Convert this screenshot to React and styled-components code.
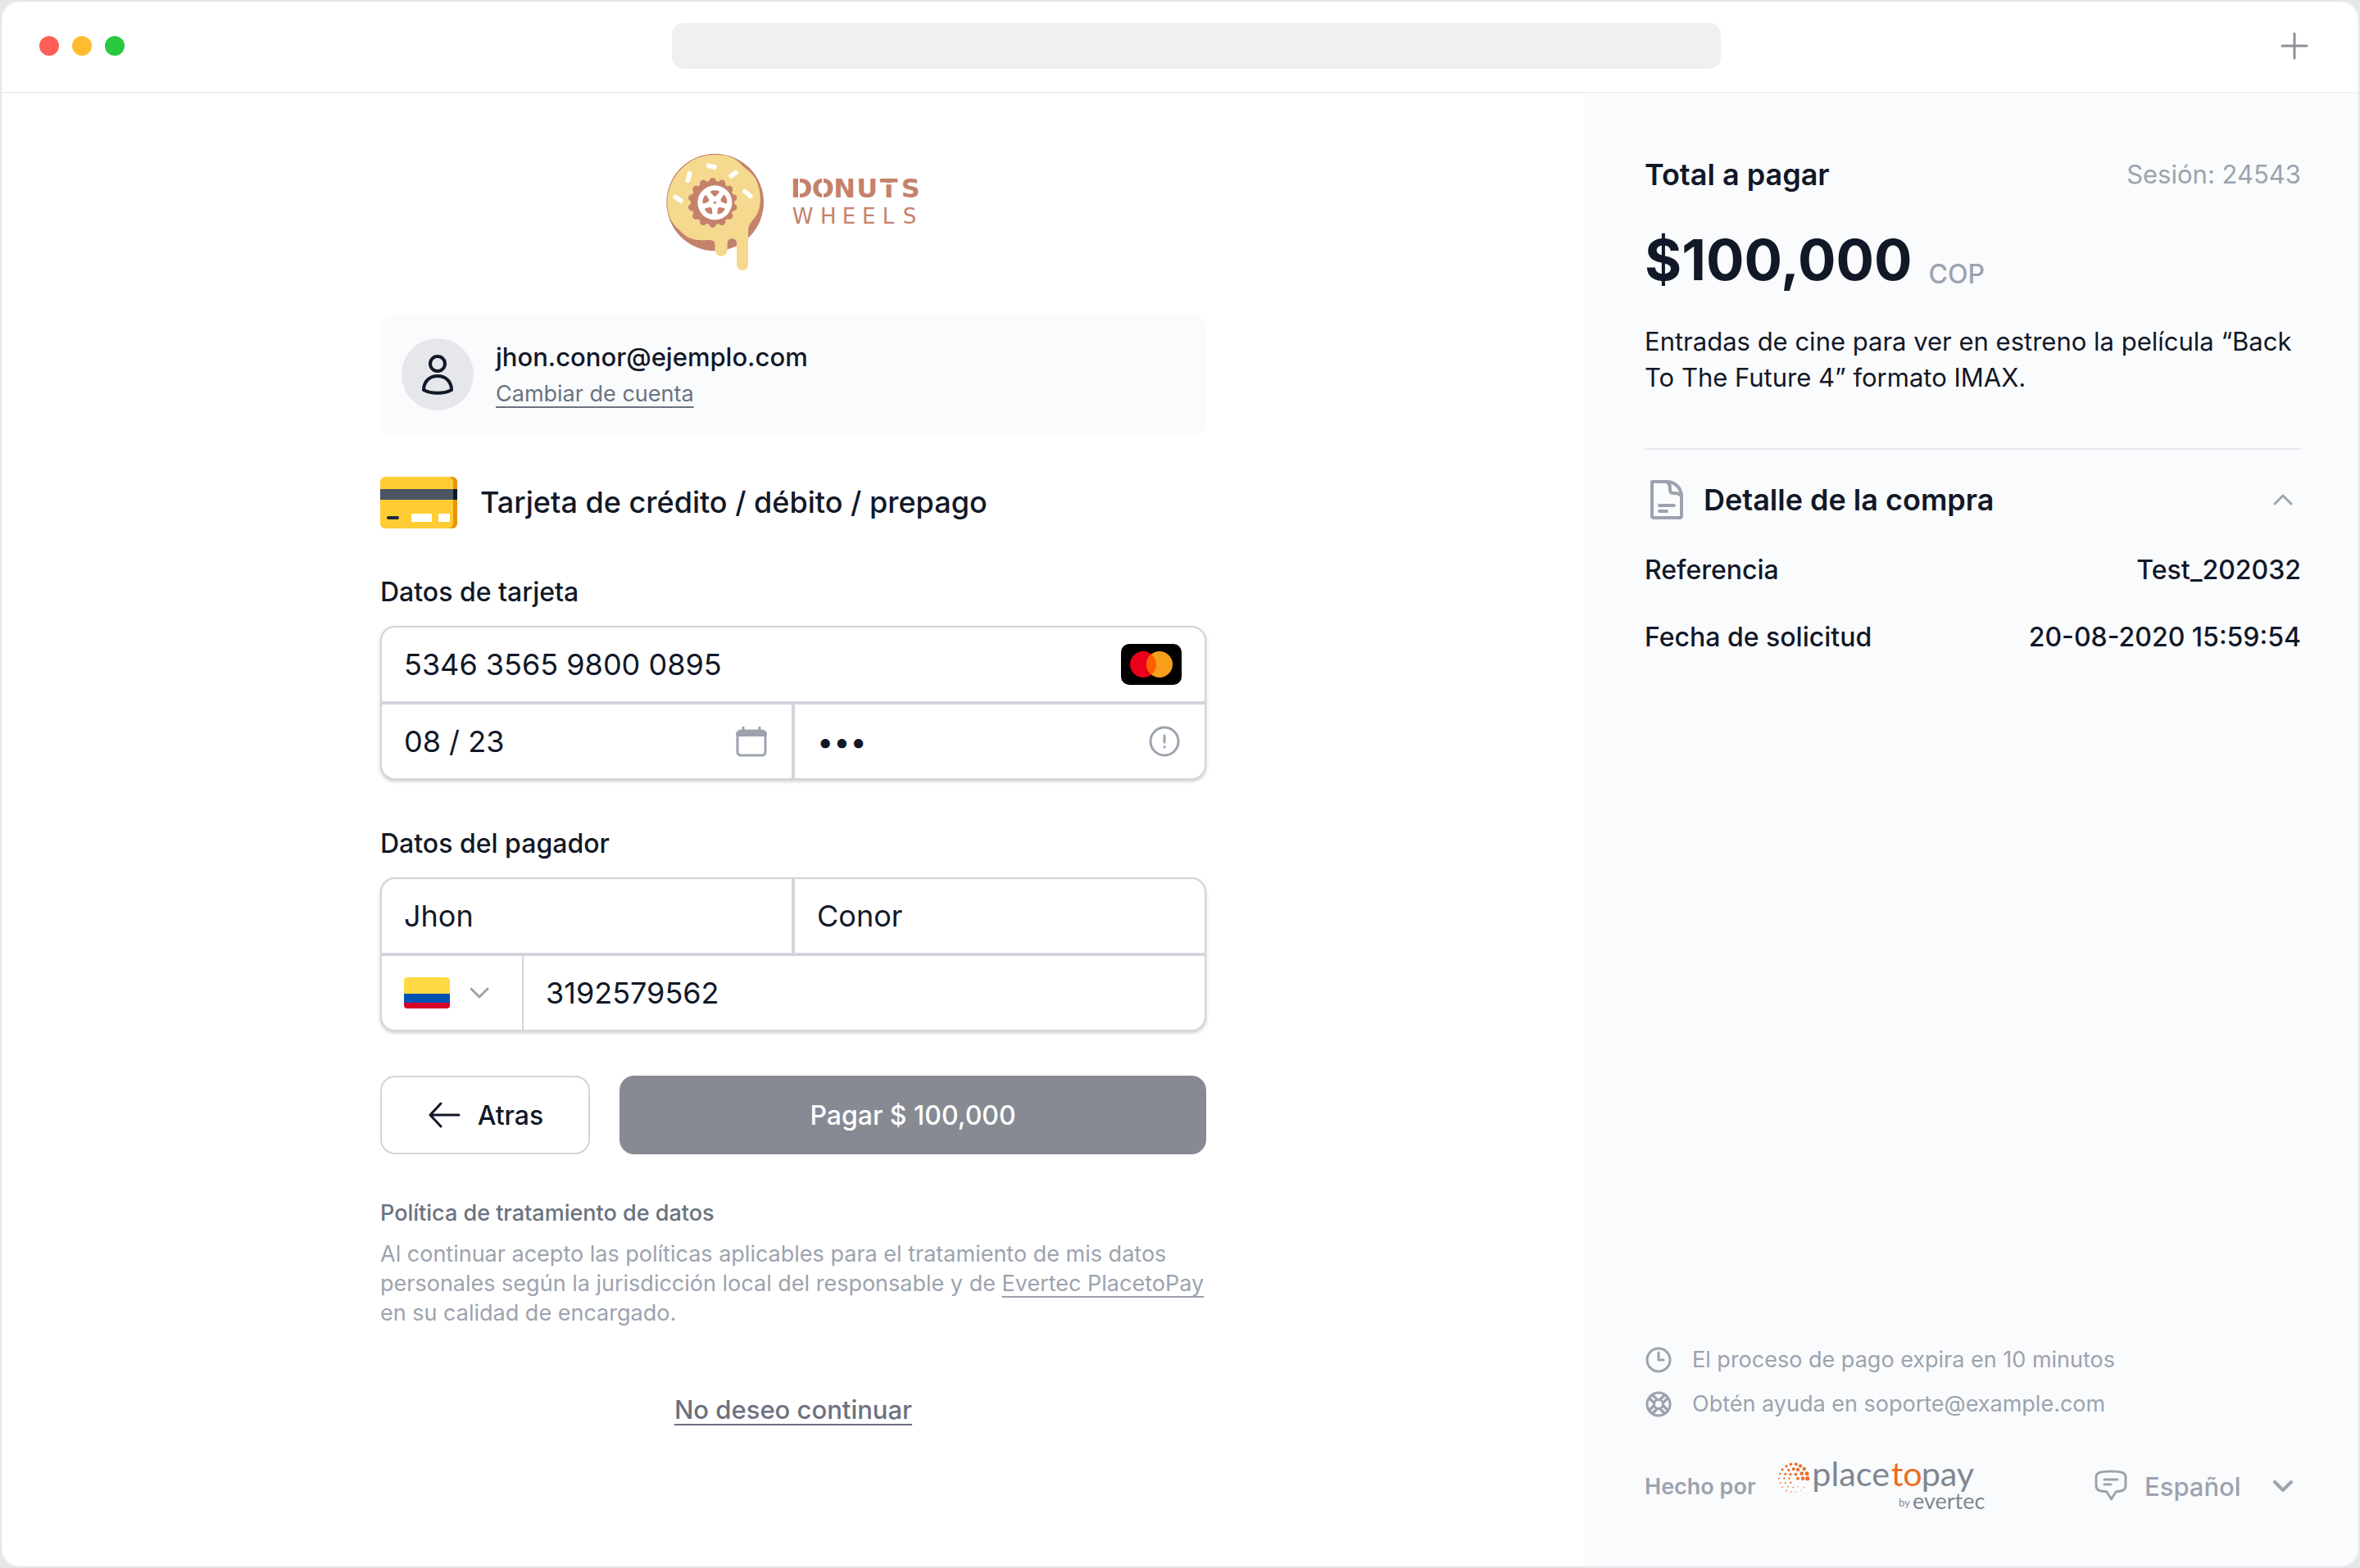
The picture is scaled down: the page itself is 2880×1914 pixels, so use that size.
import React from "react";
import styled, { createGlobalStyle, css } from "styled-components";

const ink = "#111827";
const slate = "#6b7280";
const mist = "#9ca3af";
const line = "#d1d5db";
const panel = "#fafbfd";

const GlobalStyle = createGlobalStyle`
  *, *::before, *::after { box-sizing: border-box; }
  body {
    margin: 0;
    background: #e6e7e9;
    color: ${ink};
    font-family: Inter, "Liberation Sans", sans-serif;
    font-size: 32px;
  }
  h1, h2, h3, p, dl, dd, fieldset { margin: 0; padding: 0; border: 0; }
  button, input, select { font: inherit; color: inherit; margin: 0; }
  svg { display: block; flex-shrink: 0; overflow: visible; }
`;

const underline = css`
  text-decoration: underline;
  text-decoration-thickness: 2px;
  text-underline-offset: 6px;
  text-decoration-skip-ink: none;
`;

const Window = styled.div`
  display: flex;
  flex-direction: column;
  min-height: 100vh;
  border: 2px solid #e5e7eb;
  border-radius: 24px;
  background: #fff;
  overflow: hidden;
`;

const TitleBar = styled.header`
  display: flex;
  align-items: center;
  justify-content: space-between;
  height: 112px;
  padding: 0 60px 2px 46px;
  border-bottom: 2px solid #eff0f2;
`;

const Lights = styled.div`
  display: flex;
  gap: 16px;
`;

const Light = styled.span`
  width: 24px;
  height: 24px;
  border-radius: 50%;
  background: ${(p) => p.$color};
`;

const Address = styled.input`
  flex: 0 1 1280px;
  min-width: 0;
  height: 56px;
  padding: 0 24px;
  border: 0;
  border-radius: 14px;
  background: #f0f0f0;
`;

const NewTab = styled.button`
  padding: 0 0 0 14px;
  border: 0;
  background: none;
  color: #8d9096;
`;

const Columns = styled.div`
  flex: 1;
  display: grid;
  grid-template-columns: minmax(0, 1fr) 944px;
`;

const Main = styled.main`
  display: flex;
  flex-direction: column;
  align-items: center;
  padding: 73px 40px;
`;

const Form = styled.form`
  display: flex;
  flex-direction: column;
  width: 100%;
  max-width: 1008px;
  margin-top: 54px;
`;

const Account = styled.div`
  display: flex;
  align-items: center;
  gap: 27px;
  height: 148px;
  padding: 0 26px 2px;
  border-radius: 16px;
  background: ${panel};
`;

const Avatar = styled.span`
  display: grid;
  place-items: center;
  width: 88px;
  height: 88px;
  border-radius: 50%;
  background: #e5e7eb;
`;

const AccountText = styled.div`
  display: flex;
  flex-direction: column;
  align-items: flex-start;
`;

const Email = styled.span`
  font-size: 31px;
  line-height: 48px;
  font-weight: 500;
`;

const ChangeLink = styled.a`
  font-size: 27px;
  line-height: 42px;
  color: ${slate};
  ${underline}
`;

const Method = styled.h1`
  display: flex;
  align-items: center;
  gap: 28px;
  margin-top: 50px;
  font-size: 36px;
  line-height: 63px;
  font-weight: 500;
`;

const Group = styled.fieldset`
  min-width: 0;
  margin-top: 58px;
`;

const Legend = styled.legend`
  padding: 0 0 21px;
  font-size: 32px;
  line-height: 40px;
  font-weight: 500;
`;

const FieldBox = styled.div`
  display: grid;
  gap: 4px;
  border: 2px solid ${line};
  border-radius: 18px;
  background: ${line};
  box-shadow: 0 2px 4px rgba(0, 0, 0, 0.2);
  overflow: hidden;
`;

const FieldRow = styled.div`
  display: grid;
  grid-template-columns: ${(p) => p.$columns || "minmax(0, 1fr)"};
  gap: ${(p) => p.$gap || 4}px;
`;

const Field = styled.label`
  position: relative;
  display: flex;
  align-items: center;
  gap: 22px;
  height: 90px;
  padding: 0 28px 0 27px;
  background: #fff;
`;

const TextInput = styled.input`
  flex: 1;
  min-width: 0;
  padding: 0;
  border: 0;
  outline: 0;
  background: none;
  font-size: 36px;
  line-height: 44px;
`;

const CoverSelect = styled.select`
  position: absolute;
  inset: 0;
  width: 100%;
  opacity: 0;
`;

const Actions = styled.div`
  display: grid;
  grid-template-columns: 256px minmax(0, 1fr);
  gap: 36px;
  margin-top: 54px;
`;

const Button = styled.button`
  display: flex;
  align-items: center;
  justify-content: center;
  gap: 22px;
  height: 96px;
  padding: 0;
  border: ${(p) => (p.$primary ? "0" : `2px solid ${line}`)};
  border-radius: 18px;
  background: ${(p) => (p.$primary ? "#878a93" : "#fff")};
  color: ${(p) => (p.$primary ? "#fff" : ink)};
  font-size: 32px;
  font-weight: 500;
`;

const PolicyTitle = styled.h2`
  margin-top: 54px;
  font-size: 27px;
  line-height: 36px;
  font-weight: 500;
  color: ${slate};
`;

const Policy = styled.p`
  margin-top: 14px;
  font-size: 27px;
  line-height: 36px;
  color: ${mist};
`;

const PolicyLink = styled.a`
  color: inherit;
  ${underline}
`;

const Leave = styled.a`
  align-self: center;
  margin-top: 80px;
  font-size: 31px;
  line-height: 40px;
  font-weight: 500;
  color: ${slate};
  ${underline}
`;

const Summary = styled.aside`
  display: flex;
  flex-direction: column;
  padding: 77px 70px 69px 73px;
  background: ${panel};
`;

const TotalRow = styled.div`
  display: flex;
  align-items: center;
  justify-content: space-between;
  line-height: 44px;
`;

const TotalTitle = styled.h2`
  font-size: 36px;
  font-weight: 600;
`;

const Session = styled.span`
  font-size: 31px;
  color: ${mist};
`;

const Amount = styled.p`
  display: flex;
  align-items: flex-end;
  gap: 20px;
  margin-top: 42px;
  font-size: 69px;
  line-height: 80px;
  font-weight: 700;
`;

const Currency = styled.span`
  font-size: 32px;
  line-height: 44px;
  font-weight: 500;
  color: ${mist};
`;

const Description = styled.p`
  margin-top: 38px;
  font-size: 31px;
  line-height: 44px;
`;

const Details = styled.section`
  margin-top: 64px;
  padding-top: 37px;
  border-top: 2px solid #e5e7eb;
`;

const Toggle = styled.button`
  display: flex;
  align-items: center;
  gap: 20px;
  width: 100%;
  padding: 0 8px 0 4px;
  border: 0;
  background: none;
  text-align: left;
  font-size: 36px;
  line-height: 48px;
  font-weight: 600;
`;

const ToggleText = styled.span`
  flex: 1;
`;

const DetailList = styled.dl`
  display: flex;
  flex-direction: column;
  gap: 38px;
  margin-top: 40px;
`;

const DetailRow = styled.div`
  display: flex;
  justify-content: space-between;
  font-size: 32px;
  line-height: 44px;
  font-weight: 500;
`;

const Notes = styled.div`
  display: flex;
  flex-direction: column;
  gap: 14px;
  margin-top: auto;
`;

const Note = styled.p`
  display: flex;
  align-items: center;
  gap: 24px;
  font-size: 27px;
  line-height: 40px;
  color: ${mist};
`;

const Footer = styled.footer`
  display: flex;
  align-items: center;
  height: 58px;
  margin-top: 51px;
  color: ${mist};
`;

const MadeBy = styled.span`
  margin-right: 27px;
  font-size: 27px;
  font-weight: 600;
`;

const Language = styled.label`
  display: flex;
  align-items: center;
  margin-left: auto;
  padding-right: 8px;
`;

const LanguageSelect = styled.select`
  appearance: none;
  margin: 0 37px 0 21px;
  padding: 0;
  border: 0;
  background: none;
  font-size: 31px;
  font-weight: 500;
`;

const DonutLogo = () => {
  const brown = "#c4826b";
  const bumps = Array.from({ length: 14 }, (_, i) => (i * 360) / 14);
  return (
    <svg width="310" height="143" viewBox="100 80 930 429" role="img" aria-label="Donuts Wheels">
      <circle cx="279" cy="260" r="178" fill={brown} />
      <path
        d="M104 262C104 165 182 86 276 86C318 86 345 92 372 118C388 136 412 148 426 172C446 208 450 262 436 296C428 320 400 332 400 364V488A21 21 0 0 1 358 488V408C356 388 326 388 324 408V434A23 23 0 0 1 278 434V412C278 398 262 398 246 398C214 400 186 398 158 372C138 350 104 330 104 262Z"
        fill="#f4d98f"
      />
      {bumps.map((a) => (
        <circle key={a} cx="270" cy="183" r="13" fill={brown} transform={`rotate(${a} 270 261)`} />
      ))}
      <circle cx="270" cy="261" r="80" fill={brown} />
      <circle cx="278" cy="261" r="63" fill="#fff" />
      {[0, 72, 144, 216, 288].map((a) => (
        <path
          key={a}
          d="M263 219Q278 212 293 219Q295 222 293 225L282 237Q278 240 274 237L263 225Q261 222 263 219Z"
          fill={brown}
          transform={`rotate(${a} 278 261)`}
        />
      ))}
      <circle cx="278" cy="261" r="5" fill={brown} />
      <g stroke="#fff" strokeWidth="17" strokeLinecap="round">
        <path d="M255 126L277 131M186 154L179 180M338 163L355 151M134 241L154 254M388 220L408 237" />
      </g>
      <g fill={brown} fontFamily='"DejaVu Sans", sans-serif'>
        <text x="556 633 713 797 882 960" y="243" fontSize="96" fontWeight="700">DONUTS</text>
        <text x="561 664 744 817 891 966" y="339" fontSize="78">WHEELS</text>
      </g>
      <path
        d="M586 168V248M673 168V192M673 226V250M898 192H934"
        stroke="#fff"
        strokeWidth="6"
      />
    </svg>
  );
};

const CreditCard = () => (
  <svg width="94" height="63" viewBox="0 0 94 63" aria-hidden="true">
    <rect x="10" width="84" height="63" rx="6" fill="#e8930c" />
    <rect width="89" height="63" rx="6" fill="#ffcc33" />
    <path d="M0 15H89V28H0Z" fill="#4b5563" />
    <path d="M89 15H94V28H89Z" fill="#111827" />
    <rect x="8" y="48" width="15" height="4" rx="2" fill="#1f2937" />
    <path d="M38 45H63V55H38ZM71 45H85V55H71Z" fill="#fff" />
  </svg>
);

const Mastercard = () => (
  <svg width="74" height="50" viewBox="0 0 74 50" role="img" aria-label="Mastercard">
    <rect width="74" height="50" rx="10" />
    <circle cx="27" cy="25" r="16" fill="#eb001b" />
    <circle cx="47" cy="25" r="16" fill="#f79e1b" />
    <path d="M37 12.5a16 16 0 0 1 0 25a16 16 0 0 1 0-25Z" fill="#ff5f00" />
  </svg>
);

const Flag = () => (
  <svg width="56" height="38" viewBox="0 0 56 38" aria-hidden="true">
    <clipPath id="flag"><rect width="56" height="38" rx="4" /></clipPath>
    <g clipPath="url(#flag)">
      <path d="M0 0H56V20H0Z" fill="#ffda44" />
      <path d="M0 20H56V31H0Z" fill="#0052b4" />
      <path d="M0 31H56V38H0Z" fill="#d80027" />
    </g>
  </svg>
);

const Icon = ({ size = 40, width = 3, children }) => (
  <svg
    width={size}
    height={size}
    viewBox={`0 0 ${size} ${size}`}
    fill="none"
    stroke="currentColor"
    strokeWidth={width}
    strokeLinecap="round"
    strokeLinejoin="round"
    aria-hidden="true"
  >
    {children}
  </svg>
);

const Chevron = ({ up, width = 3 }) => (
  <Icon size={28} width={width}>
    <path d={up ? "M4 19L14 9L24 19" : "M4 9L14 19L24 9"} stroke={mist} />
  </Icon>
);

const dots = [
  [106, 52, 5.5], [125, 52, 6], [90, 59, 5], [141, 58, 6.5], [155, 69, 7], [75, 71, 4.5],
  [98, 73, 5], [116, 70, 6], [132, 72, 6.5], [146, 86, 7], [165, 86, 7.5], [167, 104, 8],
  [150, 104, 7], [132, 104, 6], [67, 87, 4], [86, 88, 4.5], [105, 89, 5], [124, 89, 5.5],
  [63, 104, 3], [82, 104, 3.5], [100, 104, 3.5], [68, 121, 3], [86, 120, 3], [106, 119, 3.5],
  [76, 136, 2.5], [96, 134, 2.5], [115, 137, 2.5], [133, 134, 2], [155, 137, 2],
  [90, 149, 2.5], [107, 154, 2.5], [124, 154, 2], [142, 148, 1.5],
];

const PlacetopayLogo = () => (
  <svg width="255" height="58" viewBox="60 45 765 174" role="img" aria-label="placetopay by evertec">
    {dots.map(([x, y, r]) => (
      <circle key={`${x}-${y}`} cx={x} cy={y} r={r} fill="#e8722c" />
    ))}
    <g fill="#7f8790" fontFamily="Lato, sans-serif">
      <text x="184" y="133" fontSize="124">place</text>
      <text x="473" y="133" fontSize="124" fill="#ec6f22">to</text>
      <text x="584" y="133" fontSize="124">pay</text>
      <text x="502" y="208" fontSize="38">by</text>
      <text x="552" y="216" fontSize="81">evertec</text>
    </g>
  </svg>
);

export default function App() {
  return (
    <>
      <GlobalStyle />
      <Window>
        <TitleBar>
          <Lights>
            <Light $color="#ff5f57" />
            <Light $color="#febc2e" />
            <Light $color="#28c840" />
          </Lights>
          <Address aria-label="Dirección" />
          <NewTab type="button" aria-label="Nueva pestaña">
            <Icon size={36}><path d="M18 3V33M3 18H33" /></Icon>
          </NewTab>
        </TitleBar>
        <Columns>
          <Main>
            <DonutLogo />
            <Form onSubmit={(e) => e.preventDefault()}>
              <Account>
                <Avatar>
                  <Icon size={48} width={4}>
                    <ellipse cx="24" cy="11" rx="9" ry="9" />
                    <path d="M24 26C14 26 7 33 7 43C16 48 32 48 41 43C41 33 34 26 24 26Z" />
                  </Icon>
                </Avatar>
                <AccountText>
                  <Email>jhon.conor@ejemplo.com</Email>
                  <ChangeLink href="#cuenta">Cambiar de cuenta</ChangeLink>
                </AccountText>
              </Account>

              <Method>
                <CreditCard />
                Tarjeta de crédito / débito / prepago
              </Method>

              <Group>
                <Legend>Datos de tarjeta</Legend>
                <FieldBox>
                  <FieldRow>
                    <Field>
                      <TextInput aria-label="Número de tarjeta" defaultValue="5346 3565 9800 0895" />
                      <Mastercard />
                    </Field>
                  </FieldRow>
                  <FieldRow $columns="repeat(2, minmax(0, 1fr))">
                    <Field>
                      <TextInput aria-label="Vencimiento" defaultValue="08 / 23" />
                      <Icon>
                        <g stroke={mist}>
                          <rect x="2" y="7" width="34" height="30" rx="4" />
                          <path d="M3 11H35" strokeWidth="6" />
                          <path d="M9 3V8M29 3V8" />
                        </g>
                      </Icon>
                    </Field>
                    <Field>
                      <TextInput type="password" aria-label="Código de seguridad" defaultValue="123" />
                      <Icon>
                        <g stroke={mist}>
                          <circle cx="19" cy="20" r="17" />
                          <path d="M19 13V21M19 26.5V27" />
                        </g>
                      </Icon>
                    </Field>
                  </FieldRow>
                </FieldBox>
              </Group>

              <Group>
                <Legend>Datos del pagador</Legend>
                <FieldBox>
                  <FieldRow $columns="repeat(2, minmax(0, 1fr))">
                    <Field>
                      <TextInput aria-label="Nombre" defaultValue="Jhon" />
                    </Field>
                    <Field>
                      <TextInput aria-label="Apellido" defaultValue="Conor" />
                    </Field>
                  </FieldRow>
                  <FieldRow $columns="171px minmax(0, 1fr)" $gap={2}>
                    <Field>
                      <Flag />
                      <Chevron />
                      <CoverSelect aria-label="País" defaultValue="co">
                        <option value="co">Colombia</option>
                      </CoverSelect>
                    </Field>
                    <Field>
                      <TextInput type="tel" aria-label="Teléfono" defaultValue="3192579562" />
                    </Field>
                  </FieldRow>
                </FieldBox>
              </Group>

              <Actions>
                <Button type="button">
                  <Icon><path d="M39 20H4M17 6L4 20L17 34" /></Icon>
                  Atras
                </Button>
                <Button type="submit" $primary>Pagar $ 100,000</Button>
              </Actions>

              <PolicyTitle>Política de tratamiento de datos</PolicyTitle>
              <Policy>
                Al continuar acepto las políticas aplicables para el tratamiento de mis datos
                personales según la jurisdicción local del responsable y de{" "}
                <PolicyLink href="#politica">Evertec PlacetoPay</PolicyLink> en su calidad de
                encargado.
              </Policy>

              <Leave href="#salir">No deseo continuar</Leave>
            </Form>
          </Main>

          <Summary>
            <TotalRow>
              <TotalTitle>Total a pagar</TotalTitle>
              <Session>Sesión: 24543</Session>
            </TotalRow>
            <Amount>
              $100,000 <Currency>COP</Currency>
            </Amount>
            <Description>
              Entradas de cine para ver en estreno la película “Back To The Future 4” formato IMAX.
            </Description>

            <Details>
              <h2>
                <Toggle type="button" aria-expanded="true">
                  <Icon size={48} width={4}>
                    <g stroke={mist}>
                      <path d="M5 2H23C33 2 41 10 41 20V44Q41 46 39 46H7Q5 46 5 44Z" />
                      <path d="M23 2C27 4 27 8 27 12Q27 16 31 16C37 16 40 17 41 20M14 31H32M14 38H23" />
                    </g>
                  </Icon>
                  <ToggleText>Detalle de la compra</ToggleText>
                  <Chevron up />
                </Toggle>
              </h2>
              <DetailList>
                <DetailRow>
                  <dt>Referencia</dt>
                  <dd>Test_202032</dd>
                </DetailRow>
                <DetailRow>
                  <dt>Fecha de solicitud</dt>
                  <dd>20-08-2020 15:59:54</dd>
                </DetailRow>
              </DetailList>
            </Details>

            <Notes>
              <Note>
                <Icon size={34}>
                  <circle cx="17" cy="17" r="14" />
                  <path d="M17 8V17H23" />
                </Icon>
                El proceso de pago expira en 10 minutos
              </Note>
              <Note>
                <Icon size={34}>
                  <path d="M7 7L13 13M27 7L21 13M7 27L13 21M27 27L21 21" strokeWidth="9" strokeLinecap="butt" />
                  <path d="M9 9L13 13M25 9L21 13M9 25L13 21M25 25L21 21" stroke={panel} strokeWidth="2" />
                  <circle cx="17" cy="17" r="14" />
                  <circle cx="17" cy="17" r="5.5" fill={panel} />
                </Icon>
                Obtén ayuda en soporte@example.com
              </Note>
            </Notes>
            <Footer>
              <MadeBy>Hecho por</MadeBy>
              <PlacetopayLogo />
              <Language>
                <Icon size={40} width={3}>
                  <path d="M20 2C27 2 31 2.500 34 3.500Q38 5 38 9V19Q38 24 34 25.500Q30 26.500 26 27L20.500 36L15 27Q10 26.500 6 25.500Q2 24 2 19V9Q2 5 6 3.500C9 2.500 13 2 20 2Z" />
                  <path d="M12 12H28M12 18H20" />
                </Icon>
                <LanguageSelect aria-label="Idioma" defaultValue="es">
                  <option value="es">Español</option>
                </LanguageSelect>
                <Chevron width={4} />
              </Language>
            </Footer>
          </Summary>
        </Columns>
      </Window>
    </>
  );
}
